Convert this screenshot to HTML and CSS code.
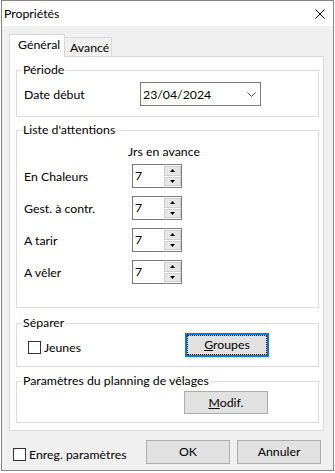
FILE: index.html
```html
<!DOCTYPE html>
<html lang="fr">
<head>
<meta charset="utf-8">
<title>Propriétés</title>
<link rel="stylesheet" href="styles.css">
</head>
<body>
<div class="window">
  <div class="titlebar">
    <span class="title">Propriétés</span>
    <svg class="close" width="10" height="10" viewBox="0 0 10 10"><path d="M0.5 0.5L9.5 9.5M9.5 0.5L0.5 9.5" stroke="#000" stroke-width="1" fill="none"/></svg>
  </div>
  <div class="client">
    <div class="tabs">
      <div class="tab active">Général</div>
      <div class="tab">Avancé</div>
    </div>
    <div class="panel">
      <fieldset class="group g-periode">
        <legend>Période</legend>
        <div class="row">
          <span class="lbl lbl-wide">Date début</span>
          <div class="combo">
            <span>23/04/2024</span>
            <svg width="9" height="5" viewBox="0 0 9 5"><path d="M0.5 0.5L4.5 4.5L8.5 0.5" stroke="#444" stroke-width="1" fill="none"/></svg>
          </div>
        </div>
      </fieldset>

      <fieldset class="group g-liste">
        <legend>Liste d'attentions</legend>
        <div class="colhead">Jrs en avance</div>
        <div class="spinrows">
          <div class="row"><span class="lbl">En Chaleurs</span><div class="spin"><span class="val">7</span><div class="spinbtns"><div class="sbtn"><svg width="5" height="3" viewBox="0 0 5 3"><path d="M0 3L2.5 0L5 3Z" fill="#000"/></svg></div><div class="sbtn"><svg width="5" height="3" viewBox="0 0 5 3"><path d="M0 0L2.5 3L5 0Z" fill="#000"/></svg></div></div></div></div>
          <div class="row"><span class="lbl">Gest. à contr.</span><div class="spin"><span class="val">7</span><div class="spinbtns"><div class="sbtn"><svg width="5" height="3" viewBox="0 0 5 3"><path d="M0 3L2.5 0L5 3Z" fill="#000"/></svg></div><div class="sbtn"><svg width="5" height="3" viewBox="0 0 5 3"><path d="M0 0L2.5 3L5 0Z" fill="#000"/></svg></div></div></div></div>
          <div class="row"><span class="lbl">A tarir</span><div class="spin"><span class="val">7</span><div class="spinbtns"><div class="sbtn"><svg width="5" height="3" viewBox="0 0 5 3"><path d="M0 3L2.5 0L5 3Z" fill="#000"/></svg></div><div class="sbtn"><svg width="5" height="3" viewBox="0 0 5 3"><path d="M0 0L2.5 3L5 0Z" fill="#000"/></svg></div></div></div></div>
          <div class="row"><span class="lbl">A vêler</span><div class="spin"><span class="val">7</span><div class="spinbtns"><div class="sbtn"><svg width="5" height="3" viewBox="0 0 5 3"><path d="M0 3L2.5 0L5 3Z" fill="#000"/></svg></div><div class="sbtn"><svg width="5" height="3" viewBox="0 0 5 3"><path d="M0 0L2.5 3L5 0Z" fill="#000"/></svg></div></div></div></div>
        </div>
      </fieldset>

      <fieldset class="group g-separer">
        <legend>Séparer</legend>
        <div class="row sep-row">
          <label class="check"><span class="box"></span><span>Jeunes</span></label>
          <button class="btn focused"><u>G</u>roupes</button>
        </div>
      </fieldset>

      <fieldset class="group g-param">
        <legend>Paramètres du planning de vêlages</legend>
        <div class="row param-row">
          <button class="btn"><u>M</u>odif.</button>
        </div>
      </fieldset>
    </div>
    <div class="footer">
      <label class="check"><span class="box"></span><span>Enreg. paramètres</span></label>
      <div class="actions">
        <button class="btn">OK</button>
        <button class="btn">Annuler</button>
      </div>
    </div>
  </div>
</div>
</body>
</html>
```

FILE: styles.css
```css
* { box-sizing: border-box; }

html, body {
  margin: 0;
  padding: 0;
  background: #ffffff;
}

body {
  font-family: Lato, "Noto Sans", sans-serif;
  font-size: 12.3px;
  color: #000;
}

.window {
  margin-left: 1px;
  width: 333px;
  height: 471px;
  border: 1px solid #858585;
  background: #f0f0f0;
  display: flex;
  flex-direction: column;
}

.titlebar {
  height: 25px;
  background: #ffffff;
  display: flex;
  align-items: center;
  justify-content: space-between;
  padding: 0 8px 0 2px;
  flex: none;
}

.title {
  line-height: 16px;
}

.close {
  display: block;
  margin-top: 1px;
}

.client {
  flex: 1;
  padding-top: 8px;
  display: flex;
  flex-direction: column;
}

.tabs {
  display: flex;
  align-items: flex-end;
  height: 22px;
  margin-left: 7px;
  position: relative;
  z-index: 1;
}

.tab {
  height: 19px;
  border: 1px solid #d9d9d9;
  border-bottom: none;
  background: #f0f0f0;
  padding: 0 5px 0 4px;
  line-height: 18px;
}

.tab.active {
  height: 23px;
  margin-bottom: -1px;
  background: #ffffff;
  width: 56px;
  padding: 2px 0 0 8px;
  line-height: 16px;
}

.tab + .tab {
  margin-left: -1px;
  width: 48px;
  padding: 1px 0 0 5px;
}

.panel {
  margin-left: 7px;
  width: 315px;
  height: 375px;
  border: 1px solid #d9d9d9;
  background: #ffffff;
  padding: 5px 4px 0 6px;
  display: flex;
  flex-direction: column;
  flex: none;
}

.group {
  margin: 0;
  padding: 0;
  border: 1px solid #dcdcdc;
  min-width: 0;
}

.group legend {
  padding: 0 1px;
  margin-left: 5px;
  line-height: 16px;
}

.row {
  display: flex;
  align-items: center;
  padding-left: 7px;
}

.lbl {
  width: 108px;
  flex: none;
}

.lbl-wide {
  width: 116px;
}

/* Période */
.g-periode .row {
  margin: 4px 0 10px;
}

.combo {
  width: 121px;
  height: 24px;
  border: 1px solid #7a7a7a;
  display: flex;
  align-items: center;
  justify-content: space-between;
  padding: 0 4px 0 2px;
}

.combo svg {
  display: block;
  margin-top: 1px;
}

/* Liste */
.g-liste {
  margin-top: 5px;
  padding-bottom: 23px;
}

.colhead {
  margin-top: 6px;
  padding-left: 111px;
  line-height: 16px;
}

.spinrows {
  margin-top: 4px;
  display: flex;
  flex-direction: column;
  gap: 8px;
}

.spin {
  width: 50px;
  height: 24px;
  border: 1px solid #7a7a7a;
  display: flex;
  align-items: center;
  justify-content: space-between;
  padding: 1px 0 1px 2px;
}

.val {
  line-height: 16px;
}

.spinbtns {
  display: flex;
  flex-direction: column;
  gap: 1px;
  align-self: stretch;
  justify-content: center;
}

.sbtn {
  width: 17px;
  height: 10px;
  background: #e6e6e6;
  border: 1px solid #cfcfcf;
  display: flex;
  align-items: center;
  justify-content: center;
}

.sbtn svg {
  display: block;
}

/* Séparer */
.g-separer {
  margin-top: 7px;
}

.sep-row {
  margin: 2px 0 9px;
  padding-left: 11px;
}

.check {
  display: flex;
  align-items: center;
  gap: 3px;
}

.box {
  width: 13px;
  height: 13px;
  border: 1px solid #333333;
  background: #ffffff;
  flex: none;
}

.sep-row .check {
  margin-top: 5px;
  width: 157px;
}

.btn {
  font: inherit;
  color: #000;
  width: 84px;
  height: 24px;
  border: 1px solid #adadad;
  background: #e1e1e1;
  padding: 0;
  margin: 0;
  line-height: 16px;
}

.btn.focused {
  border: 2px solid #0078d7;
  outline: 1px dotted #000;
  outline-offset: -3px;
}

/* Paramètres */
.g-param {
  margin-top: 6px;
}

.param-row {
  margin: 2px 0 8px;
  padding-left: 167px;
}

.param-row .btn {
  height: 23px;
}

/* Footer */
.footer {
  flex: 1;
  display: flex;
  align-items: flex-start;
  justify-content: space-between;
  padding: 9px 12px 0 11px;
}

.footer .check {
  margin-top: 7px;
}

.actions {
  display: flex;
  gap: 7px;
}
```
